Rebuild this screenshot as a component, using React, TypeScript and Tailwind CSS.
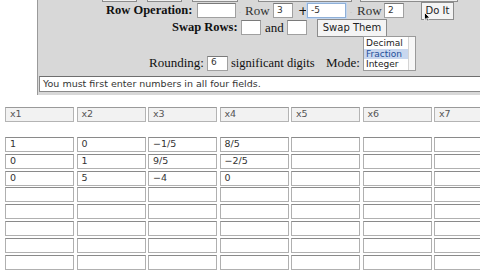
import React from 'react';

const serif = { fontFamily: '"Liberation Serif", "Times New Roman", serif' };
const sans = { fontFamily: '"DejaVu Sans", "Lucida Grande", sans-serif' };

// small text field, looks like an old aqua input
function Field({ w, value, focus }: { w: string; value?: string; focus?: boolean }) {
  return (
    <div
      className={`${w} h-[15px] shrink-0 bg-white border flex items-center pl-[3px] text-[9px] text-[#333] ${
        focus ? 'border-[#8fb0d8] shadow-[0_0_0_1px_#c3d6ee]' : 'border-[#a0a0a0] border-t-[#7a7a7a]'
      }`}
      style={sans}
    >
      {value}
    </div>
  );
}

function Btn({ w, label }: { w: string; label: string }) {
  return (
    <div
      className={`${w} h-[18px] shrink-0 bg-[#f4f4f4] border border-[#8c8c8c] flex items-center justify-center text-[10px] text-[#222]`}
      style={sans}
    >
      {label}
    </div>
  );
}

const headers = ['x1', 'x2', 'x3', 'x4', 'x5', 'x6', 'x7'];
const rows: string[][] = [
  ['1', '0', '\u22121/5', '8/5', '', '', ''],
  ['0', '1', '9/5', '\u22122/5', '', '', ''],
  ['0', '5', '\u22124', '0', '', '', ''],
  ['', '', '', '', '', '', ''],
  ['', '', '', '', '', '', ''],
  ['', '', '', '', '', '', ''],
  ['', '', '', '', '', '', ''],
  ['', '', '', '', '', '', ''],
];

export default function App() {
  return (
    <div className="w-[480px] h-[270px] overflow-hidden bg-white relative">
      {/* Control panel */}
      <div className="ml-[37px] w-[460px] h-[95px] bg-[#d8d8d8] border-l border-[#9a9a9a] flex flex-col">
        {/* bottoms of the clipped button row above */}
        <div className="h-[2px] flex items-end">
          <div className="ml-[64px] w-[35px] h-[2px] border-x border-b border-[#8c8c8c] bg-[#efefef]" />
          <div className="ml-[10px] w-[35px] h-[2px] border-x border-b border-[#8c8c8c] bg-[#efefef]" />
          <div className="ml-[10px] w-[46px] h-[2px] border-x border-b border-[#8c8c8c] bg-[#efefef]" />
          <div className="ml-[20px] w-[94px] h-[2px] border-x border-b border-[#8c8c8c] bg-[#efefef]" />
          <div className="ml-[8px] w-[98px] h-[2px] border-x border-b border-[#8c8c8c] bg-[#efefef]" />
        </div>

        {/* Row Operation */}
        <div className="h-[17px] flex items-center text-[13px] text-[#111] whitespace-nowrap" style={serif}>
          <span className="ml-[68px] w-[87px] font-bold text-[12.5px]">Row Operation:</span>
          <Field w="ml-[4px] w-[39px]" />
          <span className="ml-[3px] w-[6px] text-[8px] text-[#b5b5b5]">.</span>
          <span className="w-[25px] text-[#333]">Row</span>
          <Field w="ml-[3px] w-[20px]" value="3" />
          <span className="ml-[5px] w-[6px] text-[12px]" style={sans}>+</span>
          <Field w="ml-[3px] w-[39px]" value="-5" focus />
          <span className="ml-[4px] w-[7px] text-[8px] text-[#b5b5b5]">.</span>
          <span className="w-[24px] text-[#333]">Row</span>
          <Field w="ml-[3px] w-[20px]" value="2" />
          <Btn w="ml-[17px] w-[33px]" label="Do It" />
        </div>

        {/* Swap Rows */}
        <div className="h-[17px] flex items-center text-[13px] text-[#111] whitespace-nowrap" style={serif}>
          <span className="ml-[134px] w-[65px] font-bold text-[12.5px]">Swap Rows:</span>
          <Field w="ml-[4px] w-[20px]" />
          <span className="ml-[4px] w-[18px]">and</span>
          <Field w="ml-[4px] w-[20px]" />
          <Btn w="ml-[10px] w-[70px]" label="Swap Them" />
        </div>

        {/* Rounding + Mode */}
        <div className="h-[35px] flex items-end text-[13px] text-[#111] whitespace-nowrap" style={serif}>
          <div className="flex items-center h-[14px] mb-[1px]">
            <span className="ml-[111px] w-[54px]">Rounding:</span>
            <Field w="ml-[4px] w-[21px]" value="6" />
            <span className="ml-[3px] w-[86px] text-[12.5px]">significant digits</span>
            <span className="ml-[9px] w-[33px]">Mode:</span>
          </div>
          <div
            className="ml-[4px] w-[53px] h-[35px] bg-white border border-[#9a9a9a] flex text-[9px] leading-[10.5px] text-[#222]"
            style={sans}
          >
            <div className="flex-1 flex flex-col pt-[1px]">
              <span className="pl-[2px]">Decimal</span>
              <span className="pl-[2px] bg-[#c8d7ef] text-[#1f4f9a]">Fraction</span>
              <span className="pl-[2px]">Integer</span>
            </div>
            <div className="w-[7px] border-l border-[#d4d4d4] bg-[#f7f7f7]" />
          </div>
        </div>

        {/* Status line */}
        <div
          className="mt-[5px] ml-[1px] h-[16px] bg-white border border-[#8a8a8a] border-t-[#6e6e6e] flex items-center pl-[3px] text-[9.5px] text-[#333]"
          style={sans}
        >
          You must first enter numbers in all four fields.
        </div>
      </div>

      {/* Matrix */}
      <div className="ml-[5px] mt-[12px] flex flex-col" style={sans}>
        <div className="grid grid-cols-[repeat(7,69px)] gap-x-[2.5px]">
          {headers.map((h) => (
            <div
              key={h}
              className="h-[15px] bg-[#f2f2f2] border border-[#b4b4b4] border-t-[#9a9a9a] flex items-center pl-[4px] text-[9.5px] text-[#555]"
            >
              {h}
            </div>
          ))}
        </div>
        <div className="mt-[15px] grid grid-cols-[repeat(7,69px)] gap-x-[2.5px] gap-y-[1.8px]">
          {rows.map((r, i) =>
            r.map((v, j) => (
              <div
                key={`${i}-${j}`}
                className="h-[15px] bg-white border border-[#b0b0b0] border-t-[#8a8a8a] flex items-center pl-[4px] text-[9.5px] text-[#333]"
              >
                {v}
              </div>
            ))
          )}
        </div>
      </div>

      {/* mouse pointer over the Do It button */}
      <svg className="absolute left-[424px] top-[12px]" width="7" height="10" viewBox="0 0 7 10">
        <path d="M0.5 0.5 L0.5 8 L2.3 6.3 L3.6 9.3 L4.8 8.8 L3.5 5.9 L6 5.9 Z" fill="#000" stroke="#fff" strokeWidth="0.8" />
      </svg>
    </div>
  );
}
